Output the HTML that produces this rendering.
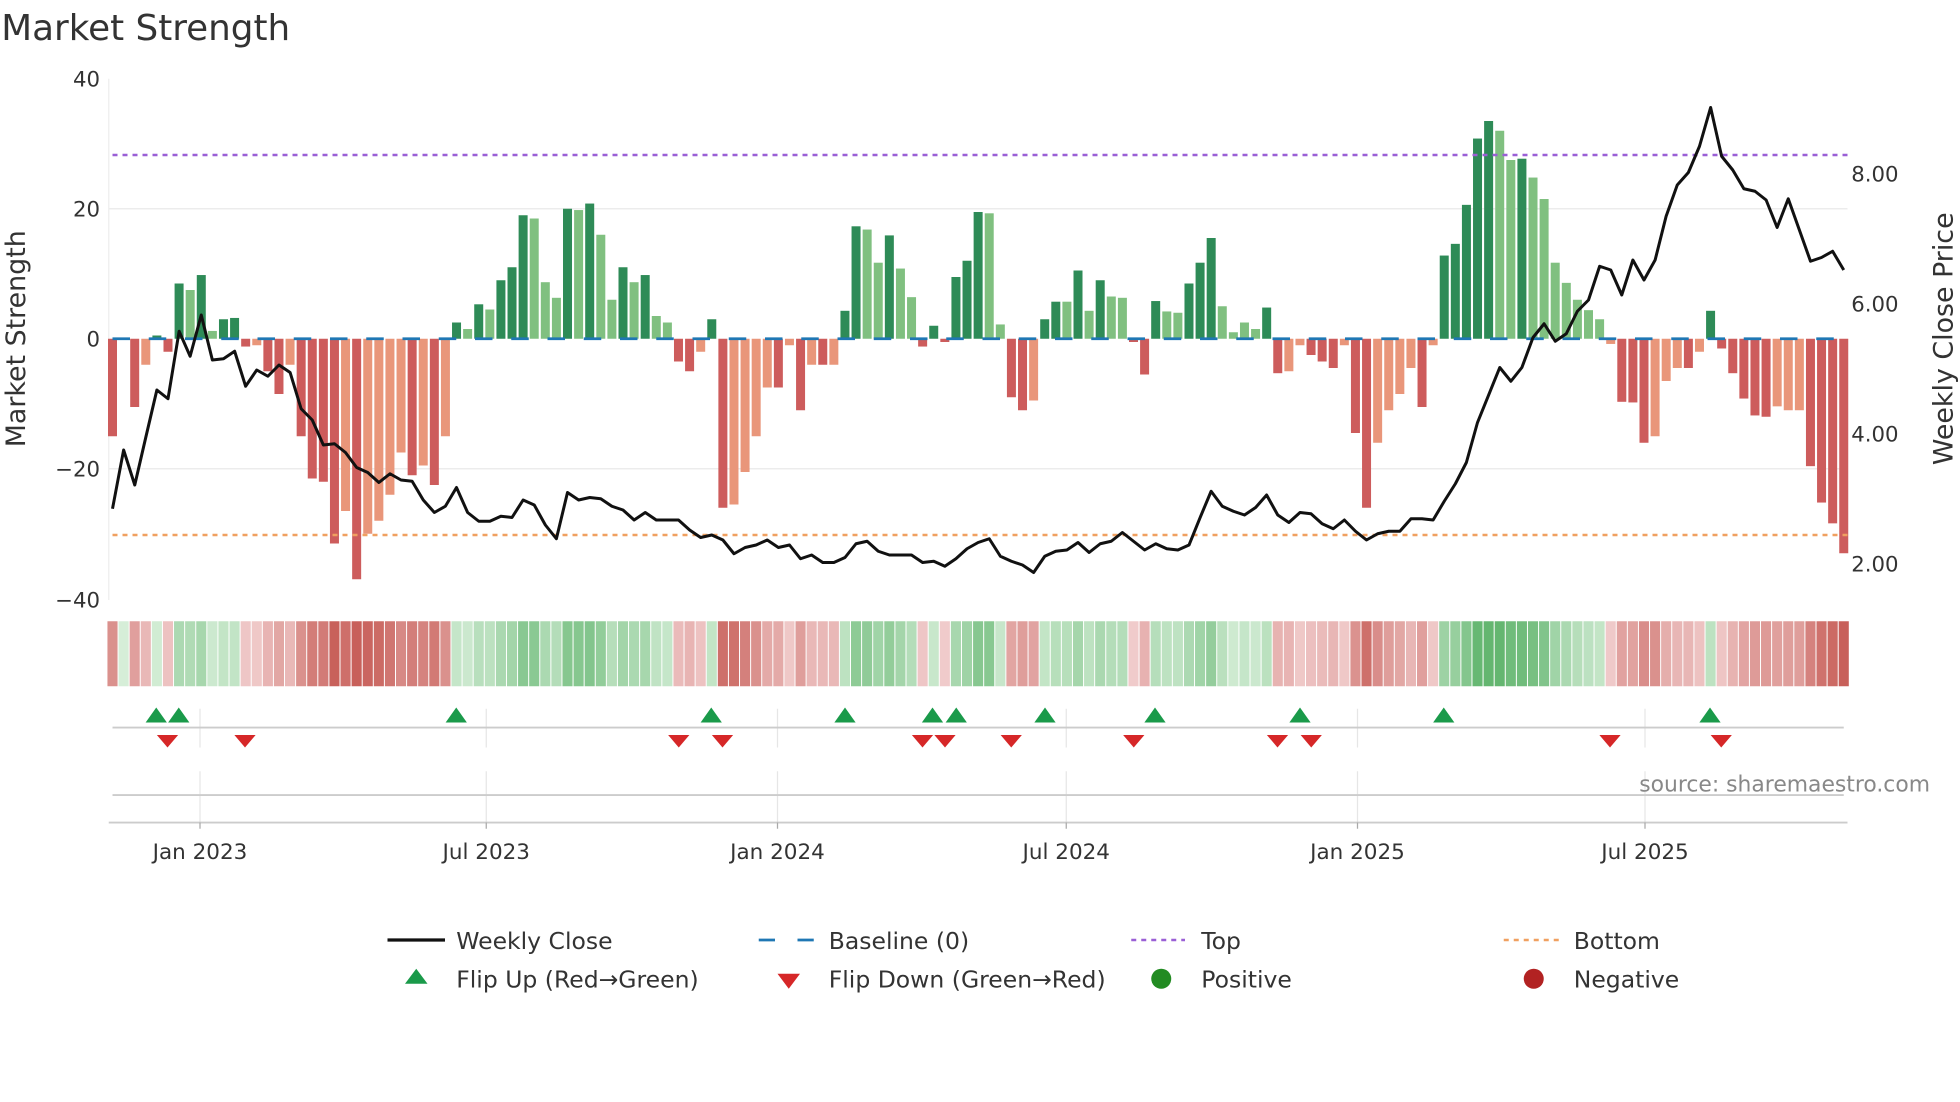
<!DOCTYPE html>
<html><head><meta charset="utf-8"><style>
html,body{margin:0;padding:0;background:#fff;}
svg{display:block;font-family:"DejaVu Sans","Liberation Sans",sans-serif;}
</style></head><body>
<svg id="s" width="1960" height="1102" viewBox="0 0 1568 881.6" xmlns="http://www.w3.org/2000/svg">
<rect width="1568" height="881.6" fill="#fff"/>
<text x="1" y="32" font-size="28.6" fill="#333">Market Strength</text>
<line x1="87" y1="167" x2="1478" y2="167" stroke="#ececec" stroke-width="1.2"/>
<line x1="87" y1="375" x2="1478" y2="375" stroke="#ececec" stroke-width="1.2"/>
<line x1="87" y1="63" x2="87" y2="480" stroke="#eee" stroke-width="1"/>
<g font-size="17" fill="#333" text-anchor="end">
<text x="80" y="69">40</text><text x="80" y="173">20</text><text x="80" y="277">0</text><text x="80" y="381">−20</text><text x="80" y="486">−40</text>
</g>
<g font-size="17" fill="#333">
<text x="1481" y="145">8.00</text><text x="1481" y="249">6.00</text><text x="1481" y="353">4.00</text><text x="1481" y="457">2.00</text>
</g>
<text transform="translate(20,271) rotate(-90)" font-size="21.5" fill="#333" text-anchor="middle">Market Strength</text>
<text transform="translate(1562,271) rotate(-90)" font-size="21.5" fill="#333" text-anchor="middle">Weekly Close Price</text>
<g id="bars"></g>
<line x1="90" y1="271" x2="1478" y2="271" stroke="#1f77b4" stroke-width="2.2" stroke-dasharray="14 15"/>
<line x1="90" y1="124" x2="1478" y2="124" stroke="#9a5fd6" stroke-width="2" stroke-dasharray="4 4"/>
<line x1="90" y1="428" x2="1478" y2="428" stroke="#f0a060" stroke-width="2" stroke-dasharray="4 4"/>
<polyline id="price" fill="none" stroke="#111" stroke-width="2.4" stroke-linejoin="round"/>
<g id="heat"></g>
<g stroke="#e6e6e6" stroke-width="1">
<line x1="160" y1="567" x2="160" y2="598"/><line x1="389" y1="567" x2="389" y2="598"/><line x1="622" y1="567" x2="622" y2="598"/><line x1="853" y1="567" x2="853" y2="598"/><line x1="1086" y1="567" x2="1086" y2="598"/><line x1="1316" y1="567" x2="1316" y2="598"/>
<line x1="160" y1="617" x2="160" y2="658"/><line x1="389" y1="617" x2="389" y2="658"/><line x1="622" y1="617" x2="622" y2="658"/><line x1="853" y1="617" x2="853" y2="658"/><line x1="1086" y1="617" x2="1086" y2="658"/><line x1="1316" y1="617" x2="1316" y2="658"/>
</g>
<line x1="90" y1="582" x2="1475" y2="582" stroke="#ccc" stroke-width="1.5"/>
<line x1="90" y1="636" x2="1475" y2="636" stroke="#ccc" stroke-width="1.5"/>
<line x1="87" y1="658" x2="1478" y2="658" stroke="#ccc" stroke-width="1.5"/>
<g stroke="#aaa" stroke-width="1"><line x1="160" y1="658" x2="160" y2="663"/><line x1="389" y1="658" x2="389" y2="663"/><line x1="622" y1="658" x2="622" y2="663"/><line x1="853" y1="658" x2="853" y2="663"/><line x1="1086" y1="658" x2="1086" y2="663"/><line x1="1316" y1="658" x2="1316" y2="663"/></g>
<g id="flips"></g>
<text x="1544" y="633" font-size="17.5" fill="#888" text-anchor="end">source: sharemaestro.com</text>
<g font-size="17.2" fill="#333" text-anchor="middle">
<text x="160" y="687">Jan 2023</text><text x="389" y="687">Jul 2023</text><text x="622" y="687">Jan 2024</text><text x="853" y="687">Jul 2024</text><text x="1086" y="687">Jan 2025</text><text x="1316" y="687">Jul 2025</text>
</g>
<g font-size="18.8" fill="#333">
<line x1="310" y1="752" x2="356" y2="752" stroke="#111" stroke-width="2.6"/>
<text x="365" y="759">Weekly Close</text>
<line x1="607" y1="752" x2="651" y2="752" stroke="#1f77b4" stroke-width="2.2" stroke-dasharray="13 18"/>
<text x="663" y="759">Baseline (0)</text>
<line x1="905" y1="752" x2="948" y2="752" stroke="#9a5fd6" stroke-width="2" stroke-dasharray="4 4"/>
<text x="961" y="759">Top</text>
<line x1="1203" y1="752" x2="1248" y2="752" stroke="#f0a060" stroke-width="2" stroke-dasharray="4 4"/>
<text x="1259" y="759">Bottom</text>
<polygon points="333,775 324,787 342,787" fill="#1a9a4a"/>
<text x="365" y="790">Flip Up (Red→Green)</text>
<polygon points="622,779 640,779 631,791" fill="#d62728"/>
<text x="663" y="790">Flip Down (Green→Red)</text>
<circle cx="929" cy="783" r="8" fill="#228b22"/>
<text x="961" y="790">Positive</text>
<circle cx="1227" cy="783" r="8" fill="#b22222"/>
<text x="1259" y="790">Negative</text>
</g>
</svg>
<script>
var B=[[-15,'R'],[0,'R'],[-10.5,'R'],[-4,'S'],[0.5,'G'],[-2,'R'],[8.5,'G'],[7.5,'L'],[9.8,'G'],[1.2,'L'],[3,'G'],[3.2,'G'],[-1.2,'R'],[-1,'S'],[-5,'R'],[-8.5,'R'],[-4,'S'],[-15,'R'],[-21.5,'R'],[-22,'R'],[-31.5,'R'],[-26.5,'S'],[-37,'R'],[-30,'S'],[-28,'S'],[-24,'S'],[-17.5,'S'],[-21,'R'],[-19.5,'S'],[-22.5,'R'],[-15,'S'],[2.5,'G'],[1.5,'L'],[5.3,'G'],[4.5,'L'],[9,'G'],[11,'G'],[19,'G'],[18.5,'L'],[8.7,'L'],[6.3,'L'],[20,'G'],[19.8,'L'],[20.8,'G'],[16,'L'],[6,'L'],[11,'G'],[8.7,'L'],[9.8,'G'],[3.5,'L'],[2.5,'L'],[-3.5,'R'],[-5,'R'],[-2,'S'],[3,'G'],[-26,'R'],[-25.5,'S'],[-20.5,'S'],[-15,'S'],[-7.5,'S'],[-7.5,'R'],[-1,'S'],[-11,'R'],[-4,'S'],[-4,'R'],[-4,'S'],[4.3,'G'],[17.3,'G'],[16.8,'L'],[11.7,'L'],[15.9,'G'],[10.8,'L'],[6.4,'L'],[-1.2,'R'],[2,'G'],[-0.5,'R'],[9.5,'G'],[12,'G'],[19.5,'G'],[19.3,'L'],[2.2,'L'],[-9,'R'],[-11,'R'],[-9.5,'S'],[3,'G'],[5.7,'G'],[5.7,'L'],[10.5,'G'],[4.3,'L'],[9,'G'],[6.5,'L'],[6.3,'L'],[-0.5,'R'],[-5.5,'R'],[5.8,'G'],[4.2,'L'],[4,'L'],[8.5,'G'],[11.7,'G'],[15.5,'G'],[5,'L'],[1,'L'],[2.5,'L'],[1.5,'L'],[4.8,'G'],[-5.3,'R'],[-5,'S'],[-1,'S'],[-2.5,'R'],[-3.5,'R'],[-4.5,'R'],[-1,'S'],[-14.5,'R'],[-26,'R'],[-16,'S'],[-11,'S'],[-8.5,'S'],[-4.5,'S'],[-10.5,'R'],[-1,'S'],[12.8,'G'],[14.6,'G'],[20.6,'G'],[30.8,'G'],[33.5,'G'],[32,'L'],[27.5,'L'],[27.7,'G'],[24.8,'L'],[21.5,'L'],[11.7,'L'],[8.6,'L'],[6,'L'],[4.4,'L'],[3,'L'],[-0.8,'S'],[-9.7,'R'],[-9.8,'R'],[-16,'R'],[-15,'S'],[-6.5,'S'],[-4.5,'S'],[-4.5,'R'],[-2,'S'],[4.3,'G'],[-1.5,'R'],[-5.3,'R'],[-9.2,'R'],[-11.8,'R'],[-12,'R'],[-10.4,'S'],[-11,'S'],[-11,'S'],[-19.6,'R'],[-25.2,'R'],[-28.4,'R'],[-33,'R']];
var P=[407,360,388,350,312,319,265,285,252,288,287,281,309,296,301,292,298,327,336,356,355,362,374,378,386,379,384,385,400,410,405,390,410,417,417,413,414,400,404,420,431,394,400,398,399,405,408,416,410,416,416,416,424,430,428,432,443,438,436,432,438,436,447,444,450,450,446,435,433,441,444,444,444,450,449,453,447,439,434,431,445,449,452,458,445,441,440,434,442,435,433,426,433,440,435,439,440,436,414,393,405,409,412,406,396,412,418,410,411,419,423,416,425,432,427,425,425,415,415,416,401,387,370,338,316,294,305,294,270,259,273,267,249,240,213,216,236,208,224,208,173,148,138,117,86,125,136,151,153,160,182,159,184,209,206,201,216];
var C={R:'#cd5c5c',S:'#e9967a',G:'#2e8b57',L:'#80c080'};
var NS='http://www.w3.org/2000/svg',sp=(1475-90)/156;
function el(n,a,p){var e=document.createElementNS(NS,n);for(var k in a)e.setAttribute(k,a[k]);p.appendChild(e);return e;}
var gb=document.getElementById('bars'),gh=document.getElementById('heat'),pts=[];
function mix(a,b,t){return 'rgb('+a.map(function(v,i){return Math.round(v+(b[i]-v)*t)}).join(',')+')';}
for(var i=0;i<B.length;i++){var x=90+i*sp,v=B[i][0],y=271-v*5.2;
 if(v!==0)el('rect',{x:x-3.6,y:Math.min(y,271),width:7.2,height:Math.abs(v*5.2),fill:C[B[i][1]]},gb);
 pts.push(x.toFixed(1)+','+P[i]);
 var t=Math.min(Math.abs(v)/32,1),col;
 if(v>=0)col=mix([214,238,216],[100,182,112],Math.pow(t,0.75));else col=mix([242,208,208],[200,96,90],Math.pow(t,0.75));
 el('rect',{x:x-sp/2+0.4,y:497,width:sp-0.8,height:52,fill:col},gh);}
document.getElementById('price').setAttribute('points',pts.join(' '));
var gf=document.getElementById('flips');
[125,143,365,569,676,746,765,836,924,1040,1155,1368].forEach(function(x){el('polygon',{points:(x)+',566 '+(x-8.5)+',578 '+(x+8.5)+',578',fill:'#1a9a4a'},gf);});
[134,196,543,578,738,756,809,907,1022,1049,1288,1377].forEach(function(x){el('polygon',{points:(x-8.5)+',588 '+(x+8.5)+',588 '+x+',598',fill:'#d62728'},gf);});
</script>
</body></html>
